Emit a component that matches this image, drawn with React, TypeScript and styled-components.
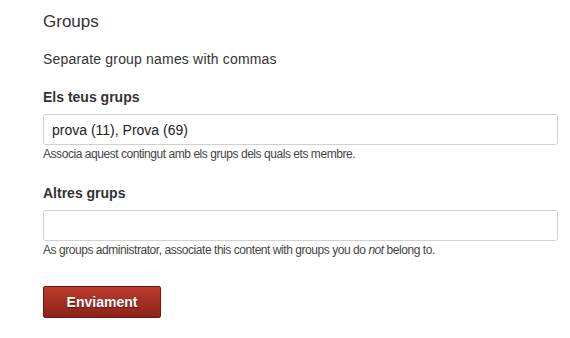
import React from 'react';
import styled, { createGlobalStyle } from 'styled-components';

const GlobalStyle = createGlobalStyle`
  html, body {
    margin: 0;
    padding: 0;
    background: #ffffff;
  }
  body {
    font-family: 'Liberation Sans', Arial, Helvetica, sans-serif;
    color: #333333;
  }
`;

const Page = styled.div`
  width: 570px;
  height: 338px;
  display: flex;
  background: #fff;
  overflow: hidden;
`;

const Content = styled.div`
  flex: 1;
  padding: 12px 12px 0 43px;
`;

const Edge = styled.div`
  width: 2px;
  background: #c8c8c8;
  border-left: 1px solid #d8d8d8;
`;

const Heading = styled.h2`
  margin: 0;
  font-size: 17px;
  font-weight: normal;
  line-height: 20px;
  color: #333;
`;

const Intro = styled.p`
  margin: 18px 0 0;
  font-size: 14px;
  line-height: 18px;
  letter-spacing: 0.18px;
  color: #333;
`;

const Field = styled.div<{ $top: number }>`
  display: flex;
  flex-direction: column;
  margin-top: ${(p) => p.$top}px;
`;

const Label = styled.label`
  font-size: 14px;
  font-weight: bold;
  line-height: 18px;
  color: #333;
  margin-bottom: 8px;
`;

const TextInput = styled.input`
  box-sizing: border-box;
  width: 515px;
  height: 31px;
  padding: 0 8px;
  border: 1px solid #d0d0d0;
  border-radius: 3px;
  font-family: 'Liberation Sans', Arial, sans-serif;
  font-size: 14px;
  color: #222;
  background: #fff;
  outline: none;
`;

const Help = styled.div`
  margin-top: 2px;
  font-size: 12px;
  line-height: 15px;
  color: #444;
  letter-spacing: -0.45px;
`;

const Submit = styled.button`
  margin-top: 28px;
  width: 118px;
  height: 32px;
  border: 1px solid #6a1a12;
  border-radius: 2px;
  background: linear-gradient(#bb3a2c, #8c2318);
  color: #fff;
  font-family: 'Liberation Sans', Arial, sans-serif;
  font-size: 14px;
  font-weight: bold;
  text-shadow: 0 1px 1px rgba(0, 0, 0, 0.5);
  cursor: pointer;
`;

export default function App() {
  return (
    <Page>
      <GlobalStyle />
      <Content>
        <Heading>Groups</Heading>
        <Intro>Separate group names with commas</Intro>
        <Field $top={20}>
          <Label>Els teus grups</Label>
          <TextInput defaultValue="prova (11), Prova (69)" />
          <Help>Associa aquest contingut amb els grups dels quals ets membre.</Help>
        </Field>
        <Field $top={22}>
          <Label>Altres grups</Label>
          <TextInput defaultValue="" />
          <Help>
            As groups administrator, associate this content with groups you do <em>not</em> belong to.
          </Help>
        </Field>
        <Submit type="button">Enviament</Submit>
      </Content>
      <Edge />
    </Page>
  );
}
